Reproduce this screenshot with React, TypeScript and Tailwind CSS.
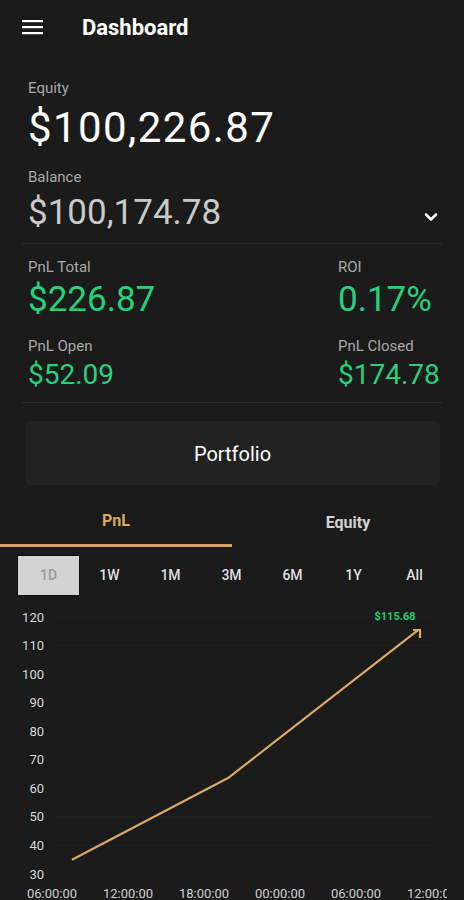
import { ChevronDown } from 'lucide-react'

const periods = ['1D', '1W', '1M', '3M', '6M', '1Y', 'All']
const yTicks = [120, 110, 100, 90, 80, 70, 60, 50, 40, 30]
const xTicks = ['06:00:00', '12:00:00', '18:00:00', '00:00:00', '06:00:00', '12:00:00']

// value -> y inside the chart svg
const yOf = (v: number) => 17 + (120 - v) * 2.856

const Stat = ({ label, value, big }: { label: string; value: string; big?: boolean }) => (
  <div>
    <div className="text-[15px] leading-[18px] text-[#a8a8a8]">{label}</div>
    <div
      className={
        big
          ? 'mt-[4px] text-[35px] leading-[40px] text-[#25d27b]'
          : 'mt-[4px] text-[28px] leading-[32px] text-[#25d27b]'
      }
    >
      {value}
    </div>
  </div>
)

const PnlChart = () => {
  const pts = [
    [72, yOf(35)],
    [228, yOf(63.6)],
    [419, yOf(115.68)],
  ]
  return (
    <svg width="447" height="300" className="block overflow-hidden">
      {yTicks.map(v => (
        <g key={v}>
          <line x1="55" x2="436" y1={yOf(v)} y2={yOf(v)} stroke="#202020" strokeWidth="1" />
          <text x="44" y={yOf(v) + 4.5} textAnchor="end" fontSize="13" fill="#d6d6d6">
            {v}
          </text>
        </g>
      ))}
      <polyline
        points={pts.map(p => p.join(',')).join(' ')}
        fill="none"
        stroke="#d9a866"
        strokeWidth="2.2"
        strokeLinejoin="round"
      />
      <polyline points="413,30 420,30 420,38" fill="none" stroke="#d9a866" strokeWidth="2.2" />
      <text x="395" y="20" textAnchor="middle" fontSize="11" fontWeight="700" fill="#22cf75">
        $115.68
      </text>
      {xTicks.map((t, i) => (
        <text key={i} x={52 + i * 76} y="298" textAnchor="middle" fontSize="13" fill="#d0d0d0">
          {t}
        </text>
      ))}
    </svg>
  )
}

export default function App() {
  return (
    <div className="h-[900px] w-full overflow-hidden bg-[#1b1b1b] font-['Roboto',sans-serif] text-white">
      <header className="flex h-[54px] items-center px-[22px]">
        <svg width="21" height="16" viewBox="0 0 21 16">
          <rect x="0" y="1" width="21" height="2.2" fill="#fff" />
          <rect x="0" y="7" width="21" height="2.2" fill="#fff" />
          <rect x="0" y="13" width="21" height="2.2" fill="#fff" />
        </svg>
        <h1 className="ml-[39px] text-[22px] font-bold">Dashboard</h1>
      </header>

      <section className="px-[28px] pt-[25px]">
        <div className="text-[15px] leading-[18px] text-[#a8a8a8]">Equity</div>
        <div className="mt-[7px] text-[42px] leading-[48px] tracking-[1.4px]">$100,226.87</div>
        <div className="mt-[16px] text-[15px] leading-[18px] text-[#a8a8a8]">Balance</div>
        <div className="mt-[7px] flex items-end justify-between">
          <span className="text-[35px] leading-[40px] text-[#c9c9c9]">$100,174.78</span>
          <ChevronDown className="mb-[6px] mr-[-5px]" size={20} strokeWidth={3} />
        </div>
      </section>

      <div className="mx-[22px] mt-[10px] h-px bg-[#2b2b2b]" />

      <section className="grid grid-cols-[310px_1fr] gap-y-[17px] px-[28px] pt-[14px]">
        <Stat label="PnL Total" value="$226.87" big />
        <Stat label="ROI" value="0.17%" big />
        <Stat label="PnL Open" value="$52.09" />
        <Stat label="PnL Closed" value="$174.78" />
      </section>

      <div className="mx-[22px] mt-[11px] h-px bg-[#2b2b2b]" />

      <button className="mx-[25px] mt-[18px] flex h-[64px] w-[415px] items-center justify-center rounded-md bg-[#222222] pt-[2px] text-[20px] text-white">
        Portfolio
      </button>

      <div className="mt-[11px] flex">
        <div className="flex h-[51px] w-[232px] items-center justify-center border-b-[3px] border-[#d4a35f] pt-[2px] text-[16px] font-bold text-[#d8a95f]">
          PnL
        </div>
        <div className="flex h-[51px] flex-1 items-center justify-center pt-[2px] text-[16px] font-bold text-[#d2d2d2]">
          Equity
        </div>
      </div>

      <div className="ml-[18px] mt-[9px] flex">
        {periods.map(p => (
          <div
            key={p}
            className={
              p === '1D'
                ? 'flex h-[39px] w-[61px] items-center justify-center bg-[#d3d3d3] text-[14px] font-medium text-[#9a9a9a] shadow-[0_0_0_1px_#0c0c0c]'
                : 'flex h-[39px] w-[61px] items-center justify-center text-[14px] font-medium text-[#dedede]'
            }
          >
            {p}
          </div>
        ))}
      </div>

      <div className="mt-[5px]">
        <PnlChart />
      </div>
    </div>
  )
}
